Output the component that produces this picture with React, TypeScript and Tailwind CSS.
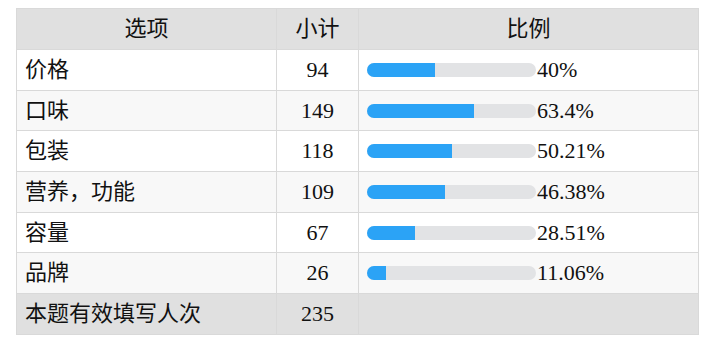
const rows = [
  { name: '价格', count: 94, pct: 40, label: '40%' },
  { name: '口味', count: 149, pct: 63.4, label: '63.4%' },
  { name: '包装', count: 118, pct: 50.21, label: '50.21%' },
  { name: '营养，功能', count: 109, pct: 46.38, label: '46.38%' },
  { name: '容量', count: 67, pct: 28.51, label: '28.51%' },
  { name: '品牌', count: 26, pct: 11.06, label: '11.06%' },
];

function Bar({ pct }: { pct: number }) {
  return (
    <div className="h-[14px] w-[169px] shrink-0 overflow-hidden rounded-full bg-[#e2e3e5]">
      <div className="h-full bg-[#2ba3f6]" style={{ width: `${pct}%` }} />
    </div>
  );
}

export default function App() {
  return (
    <div className="min-h-screen bg-white pl-4 pt-2 font-['Liberation_Serif','Noto_Sans_CJK_SC',serif] text-[22px] leading-[24px] text-[#111]">
      <table className="w-[683px] table-fixed border-collapse">
        <colgroup>
          <col className="w-[260px]" />
          <col className="w-[82px]" />
          <col />
        </colgroup>
        <thead>
          <tr className="h-[41px] bg-[#e0e0e0]">
            <th className="border border-[#d9d9d9] p-0 font-normal">选项</th>
            <th className="border border-[#d9d9d9] p-0 font-normal">小计</th>
            <th className="border border-[#d9d9d9] p-0 font-normal">比例</th>
          </tr>
        </thead>
        <tbody>
          {rows.map((r, i) => (
            <tr key={r.name} className={`h-[40.7px] ${i % 2 === 0 ? 'bg-white' : 'bg-[#f8f8f8]'}`}>
              <td className="border border-[#d9d9d9] px-[8px] py-0">{r.name}</td>
              <td className="border border-[#d9d9d9] p-0 text-center">{r.count}</td>
              <td className="border border-[#d9d9d9] px-[8px] py-0">
                <div className="flex items-center">
                  <Bar pct={r.pct} />
                  <span className="pl-px">{r.label}</span>
                </div>
              </td>
            </tr>
          ))}
          <tr className="h-[40.7px] bg-[#e0e0e0]">
            <td className="border border-[#d9d9d9] px-[8px] py-0">本题有效填写人次</td>
            <td className="border border-[#d9d9d9] p-0 text-center">235</td>
            <td className="border border-[#d9d9d9] p-0"></td>
          </tr>
        </tbody>
      </table>
    </div>
  );
}
